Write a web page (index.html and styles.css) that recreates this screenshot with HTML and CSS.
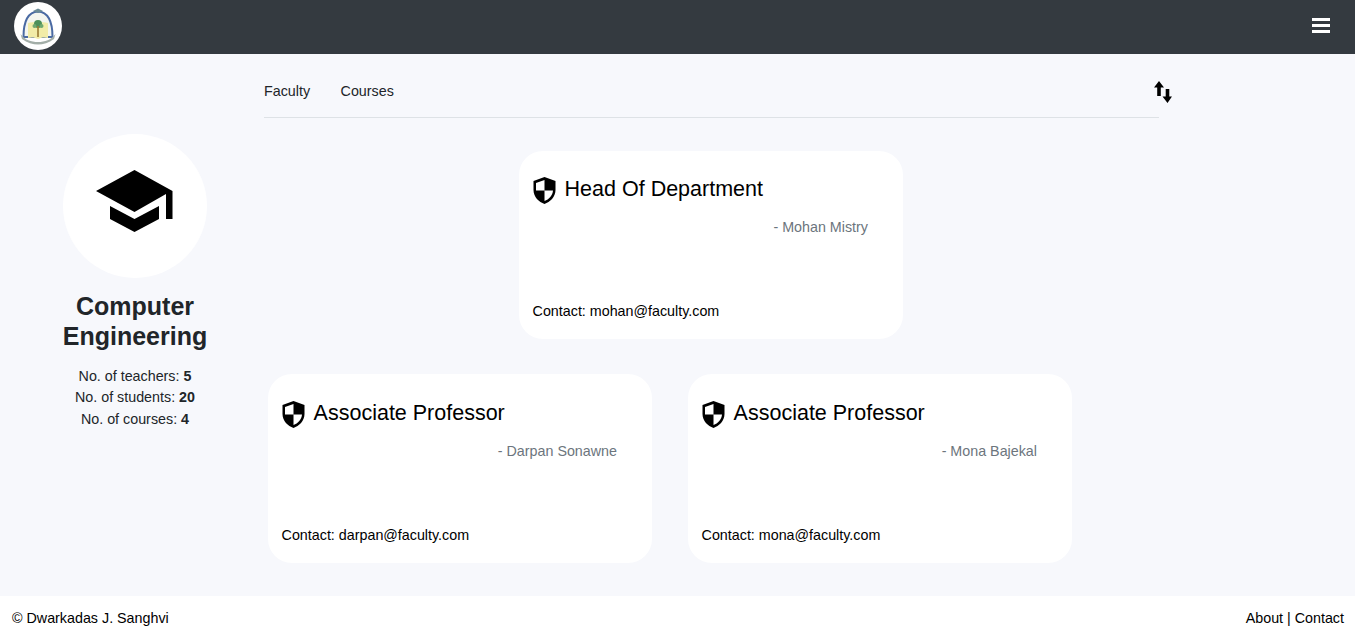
FILE: index.html
```html
<!DOCTYPE html>
<html lang="en">
<head>
    <meta charset="UTF-8">
    <title>Computer Engineering</title>
    <link rel="stylesheet" href="styles.css">
</head>
<body>
    <header class="navbar">
        <div class="logo">
            <svg width="36" height="38" viewBox="0 0 36 38">
                <path d="M3.500 30 C3.500 13 9 5 18 4.500 C27 5 32.500 13 32.500 30 Z" fill="#f3f5ef" stroke="#4a6aa3" stroke-width="2"/>
                <path d="M8 16 C12 14.500 15 15 18 17 C21 15 24 14.500 28 16 L28 31 C24 30 21 30.500 18 32 C15 30.500 12 30 8 31 Z" fill="#f2eca8"/>
                <circle cx="18" cy="17" r="4" fill="#4c8f5a"/>
                <circle cx="14.500" cy="19" r="2" fill="#6fa86f"/>
                <circle cx="21.500" cy="19" r="2" fill="#6fa86f"/>
                <rect x="17.200" y="19" width="1.600" height="11" fill="#9a7a34"/>
                <path d="M0.500 27 C5 33 11 35 18 35 C25 35 31 33 35.500 27 L34 32 C29 36 23 37.500 18 37.500 C13 37.500 7 36 2 32 Z" fill="#a3aea8"/>
                <path d="M13 4 L18 1.500 L23 4 L18 6 Z" fill="#6a8a96"/>
            </svg>
        </div>
        <button class="menu-btn" aria-label="Menu">
            <span></span><span></span><span></span>
        </button>
    </header>

    <main class="page">
        <aside class="dept">
            <div class="dept-icon">
                <svg class="cap" width="77" height="62" viewBox="0 0 77 62">
                    <path d="M38.500 0 L76.500 21 L76.500 49 L70 49 L70 24 L38.500 42 L0 21 Z" fill="#000"/>
                    <path d="M14 36 L38.500 49 L63 36 L63 49 L38.500 62 L14 49 Z" fill="#000"/>
                </svg>
            </div>
            <h1>Computer Engineering</h1>
            <p>No. of teachers: <b>5</b></p>
            <p>No. of students: <b>20</b></p>
            <p>No. of courses: <b>4</b></p>
        </aside>

        <section class="content">
            <nav class="tabs">
                <a href="#">Faculty</a>
                <a href="#">Courses</a>
                <svg class="sort-icon" width="19" height="22" viewBox="0 0 19 22">
                    <path d="M6 0 L11 6.500 L7.800 6.500 L7.800 15 L4.200 15 L4.200 6.500 L1 6.500 Z" fill="#000"/>
                    <path d="M12.700 8 L16.300 8 L16.300 15.500 L19 15.500 L14.500 22 L9.500 15.500 L12.700 15.500 Z" fill="#000"/>
                </svg>
            </nav>

            <div class="row row-top">
                <article class="card">
                    <h2>
                        <svg class="shield" width="23" height="27" viewBox="0 0 23 27"><path fill-rule="evenodd" d="M11.500 0 L22.500 4 L22.500 13 C22.500 20 17 25 11.500 27 C6 25 0.500 20 0.500 13 L0.500 4 Z M11.500 3 L3 6 L3 13.500 L11.500 13.500 Z M11.500 13.500 L11.500 24 C16 22.500 19.700 18.500 20 13.500 Z" fill="#000"/></svg>
                        Head Of Department
                    </h2>
                    <p class="name">- Mohan Mistry</p>
                    <p class="contact">Contact: mohan@faculty.com</p>
                </article>
            </div>

            <div class="row">
                <article class="card">
                    <h2>
                        <svg class="shield" width="23" height="27" viewBox="0 0 23 27"><path fill-rule="evenodd" d="M11.500 0 L22.500 4 L22.500 13 C22.500 20 17 25 11.500 27 C6 25 0.500 20 0.500 13 L0.500 4 Z M11.500 3 L3 6 L3 13.500 L11.500 13.500 Z M11.500 13.500 L11.500 24 C16 22.500 19.700 18.500 20 13.500 Z" fill="#000"/></svg>
                        Associate Professor
                    </h2>
                    <p class="name">- Darpan Sonawne</p>
                    <p class="contact">Contact: darpan@faculty.com</p>
                </article>
                <article class="card">
                    <h2>
                        <svg class="shield" width="23" height="27" viewBox="0 0 23 27"><path fill-rule="evenodd" d="M11.500 0 L22.500 4 L22.500 13 C22.500 20 17 25 11.500 27 C6 25 0.500 20 0.500 13 L0.500 4 Z M11.500 3 L3 6 L3 13.500 L11.500 13.500 Z M11.500 13.500 L11.500 24 C16 22.500 19.700 18.500 20 13.500 Z" fill="#000"/></svg>
                        Associate Professor
                    </h2>
                    <p class="name">- Mona Bajekal</p>
                    <p class="contact">Contact: mona@faculty.com</p>
                </article>
            </div>
        </section>
    </main>

    <footer class="footer">
        <span>© Dwarkadas J. Sanghvi</span>
        <span>About | Contact</span>
    </footer>
</body>
</html>
```

FILE: styles.css
```css
* {
    margin: 0;
    padding: 0;
    box-sizing: border-box;
}

body {
    font-family: "Liberation Sans", Arial, sans-serif;
    background: #f7f8fc;
    color: #212529;
    height: 641px;
    overflow: hidden;
    display: flex;
    flex-direction: column;
}

/* Navbar */
.navbar {
    height: 54px;
    flex-shrink: 0;
    background: #343a40;
    display: flex;
    align-items: center;
    justify-content: space-between;
    padding: 0 25px 0 14px;
}

.logo {
    width: 48px;
    height: 48px;
    margin-top: -2px;
    border-radius: 50%;
    background: #fff;
    display: flex;
    align-items: center;
    justify-content: center;
}

.menu-btn {
    width: 18px;
    margin-bottom: 3px;
    background: none;
    border: none;
    display: flex;
    flex-direction: column;
    gap: 3px;
}

.menu-btn span {
    height: 3px;
    background: #fff;
}

/* Page */
.page {
    flex: 1;
    display: flex;
}

.dept {
    flex: 0 0 270px;
    padding-top: 80px;
    text-align: center;
    font-size: 14.3px;
    line-height: 21.5px;
}

.dept-icon {
    width: 144px;
    height: 144px;
    border-radius: 50%;
    background: #fff;
    margin: 0 auto 13px;
    display: flex;
    align-items: center;
    justify-content: center;
}

.cap {
    margin: 0 2px 10px 0;
}

.dept h1 {
    font-size: 25px;
    line-height: 30px;
    font-weight: 700;
    margin: 0 50px 14.500px;
}

/* Tabs */
.content {
    flex: 0 0 895px;
    margin-left: -6px;
}

.tabs {
    height: 64px;
    padding-top: 10px;
    border-bottom: 1px solid #dee2e6;
    display: flex;
    align-items: center;
    gap: 30.500px;
    font-size: 14.3px;
    position: relative;
}

.tabs a {
    color: #212529;
    text-decoration: none;
}

.sort-icon {
    position: absolute;
    left: 889px;
    top: 27px;
}

/* Cards */
.row {
    display: flex;
    gap: 36px;
    padding-left: 4px;
    margin-top: 35.300px;
}

.row-top {
    justify-content: center;
    padding: 0 1px 0 0;
    margin-top: 32.600px;
}

.card {
    flex: 0 0 384px;
    height: 188.400px;
    background: #fff;
    border-radius: 24px;
    padding: 23.800px 14px 20px 13.600px;
    display: flex;
    flex-direction: column;
    color: #000;
}

.card h2 {
    height: 29px;
    font-size: 21.500px;
    font-weight: 400;
    line-height: 28px;
    display: flex;
    align-items: center;
    gap: 9px;
}

.shield {
    margin-top: 4px;
}

.name {
    font-size: 14.3px;
    color: #6c757d;
    text-align: right;
    padding-right: 21px;
    margin-top: 16px;
}

.contact {
    font-size: 14.3px;
    margin-top: auto;
}

/* Footer */
.footer {
    height: 45px;
    flex-shrink: 0;
    background: #fff;
    color: #000;
    font-size: 14.3px;
    display: flex;
    justify-content: space-between;
    padding: 14px 11px 0 12px;
}
```
